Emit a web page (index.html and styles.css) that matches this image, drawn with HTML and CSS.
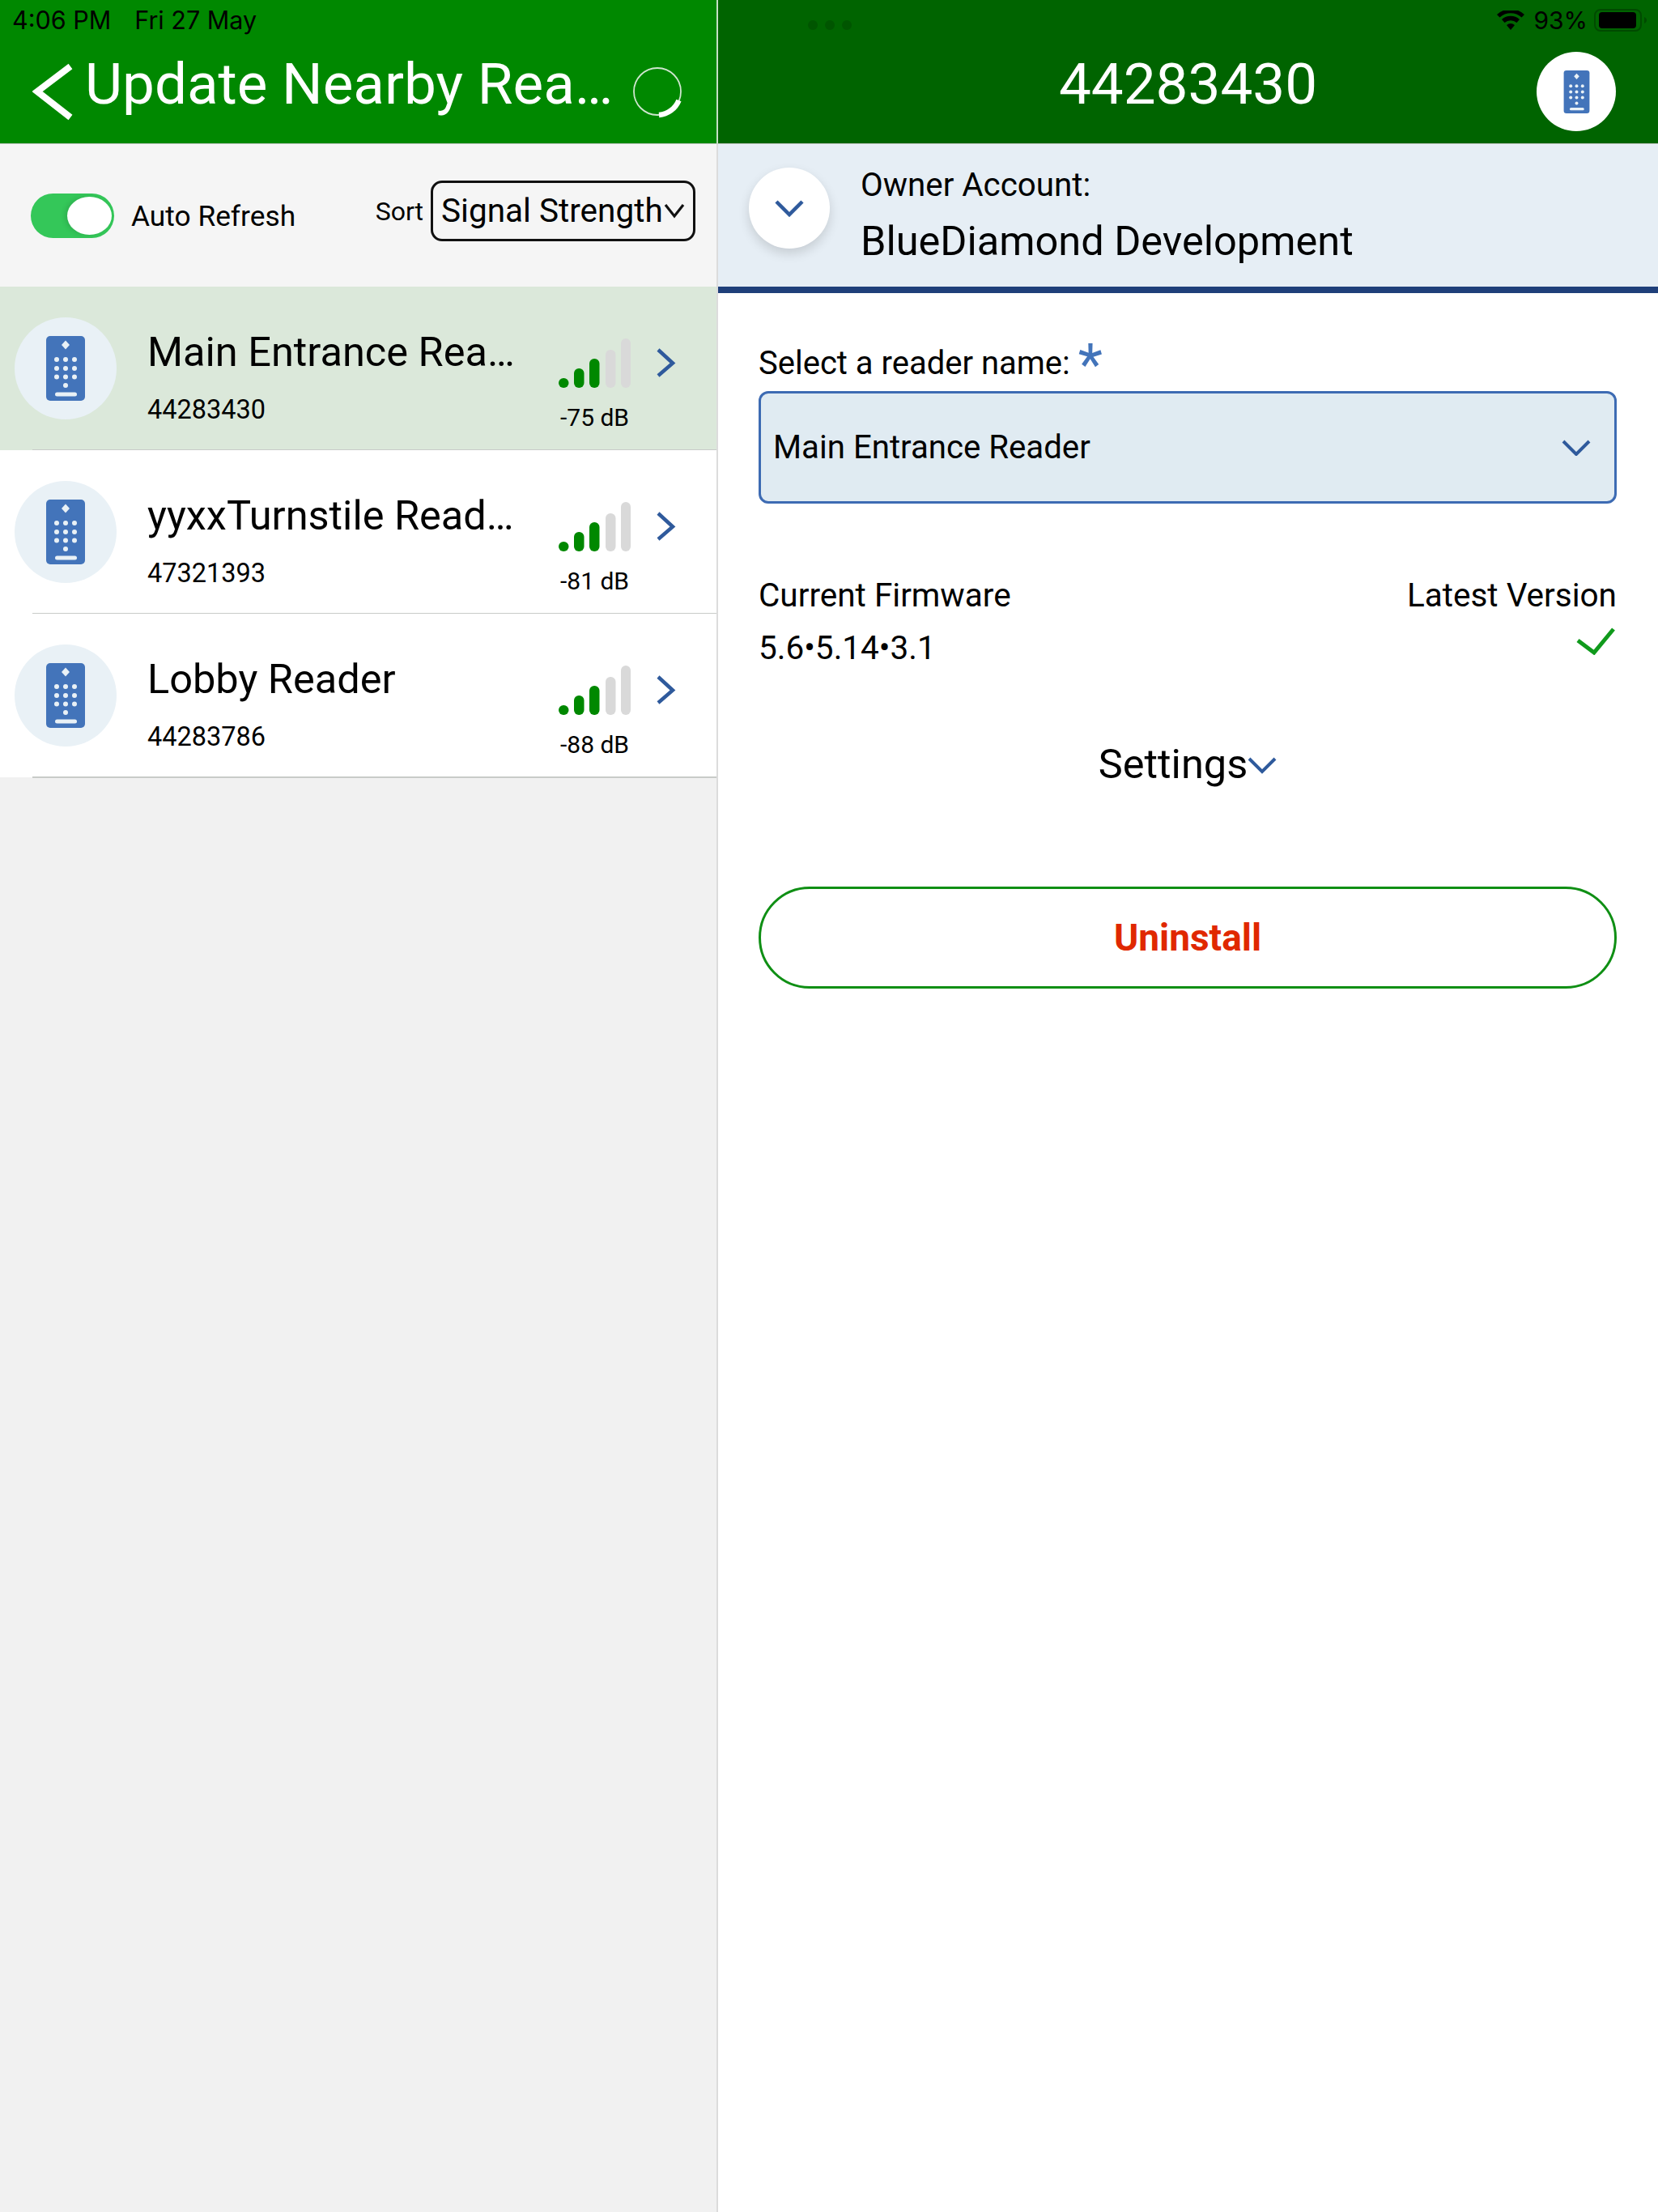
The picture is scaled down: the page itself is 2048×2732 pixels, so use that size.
FILE: index.html
```html
<!DOCTYPE html>
<html lang="en">
<head>
<meta charset="utf-8">
<title>Update Nearby Readers</title>
<link rel="stylesheet" href="styles.css">
</head>
<body>
<svg class="defs" width="0" height="0" aria-hidden="true">
  <defs>
    <symbol id="remote" viewBox="0 0 48 80">
      <rect width="48" height="80" rx="5" fill="#4374ba"/>
      <g fill="#e9f1f6">
        <path d="M24 5.500l5 5.500-5 5.500-5-5.500z"/>
        <circle cx="13" cy="29" r="3"/><circle cx="24" cy="29" r="3"/><circle cx="35" cy="29" r="3"/>
        <circle cx="13" cy="40" r="3"/><circle cx="24" cy="40" r="3"/><circle cx="35" cy="40" r="3"/>
        <circle cx="13" cy="50.500" r="3"/><circle cx="24" cy="50.500" r="3"/><circle cx="35" cy="50.500" r="3"/>
        <circle cx="24" cy="61" r="3"/>
        <rect x="11" y="69.500" width="27" height="5" rx="2.500"/>
      </g>
    </symbol>
    <symbol id="signal" viewBox="0 0 89 61">
      <g fill="#008800">
        <rect x="0" y="49" width="12.500" height="12" rx="6"/>
        <rect x="19" y="37" width="12.500" height="24" rx="6"/>
        <rect x="38" y="25" width="12.500" height="36" rx="6"/>
      </g>
      <g fill="#d9d9d9">
        <rect x="58" y="14" width="12.500" height="47" rx="6"/>
        <rect x="77" y="0" width="12" height="61" rx="6"/>
      </g>
    </symbol>
  </defs>
</svg>
<main class="app">
  <section class="left">
    <header class="bar bar-left">
      <div class="status">
        <span class="time">4:06 PM</span>
        <span class="date">Fri 27 May</span>
      </div>
      <div class="nav">
        <svg class="back" viewBox="0 0 52 72"><path d="M47 5L6 36l41 32" fill="none" stroke="#fff" stroke-width="8"/></svg>
        <h1 class="title">Update Nearby Rea…</h1>
        <svg class="spinner" viewBox="0 0 70 70">
          <circle cx="35" cy="35" r="29" fill="none" stroke="#cfe6cf" stroke-width="1.800"/>
          <path d="M61.500 46A29 29 0 0 1 37 64" fill="none" stroke="#fff" stroke-width="6.500"/>
        </svg>
      </div>
    </header>
    <div class="toolbar">
      <div class="toggle"><span class="knob"></span></div>
      <span class="auto">Auto Refresh</span>
      <span class="sort-label">Sort</span>
      <div class="sort-box">
        <span class="sort-value">Signal Strength</span>
        <svg class="sort-chev" viewBox="0 0 26 20"><path d="M2 3l11 14L24 3" fill="none" stroke="#111" stroke-width="3.200"/></svg>
      </div>
    </div>
    <ul class="list">
      <li class="row row-active">
        <div class="avatar"><svg class="remote"><use href="#remote"/></svg></div>
        <div class="info"><div class="name">Main Entrance Rea…</div><div class="serial">44283430</div></div>
        <div class="signal"><svg class="bars"><use href="#signal"/></svg><div class="db">-75 dB</div></div>
        <svg class="row-chev" viewBox="0 0 26 37"><path d="M3 2l18 16.500L3 34" fill="none" stroke="#2f5a9c" stroke-width="4.500"/></svg>
      </li>
      <li class="row">
        <div class="avatar"><svg class="remote"><use href="#remote"/></svg></div>
        <div class="info"><div class="name">yyxxTurnstile Read…</div><div class="serial">47321393</div></div>
        <div class="signal"><svg class="bars"><use href="#signal"/></svg><div class="db">-81 dB</div></div>
        <svg class="row-chev" viewBox="0 0 26 37"><path d="M3 2l18 16.500L3 34" fill="none" stroke="#2f5a9c" stroke-width="4.500"/></svg>
      </li>
      <li class="row">
        <div class="avatar"><svg class="remote"><use href="#remote"/></svg></div>
        <div class="info"><div class="name">Lobby Reader</div><div class="serial">44283786</div></div>
        <div class="signal"><svg class="bars"><use href="#signal"/></svg><div class="db">-88 dB</div></div>
        <svg class="row-chev" viewBox="0 0 26 37"><path d="M3 2l18 16.500L3 34" fill="none" stroke="#2f5a9c" stroke-width="4.500"/></svg>
      </li>
    </ul>
  </section>
  <section class="right">
    <header class="bar bar-right">
      <div class="status status-right">
        <span class="dots"><i></i><i></i><i></i></span>
        <span class="sys">
          <svg class="wifi" viewBox="0 0 34 24"><path d="M17 24l-5-6a7.500 7.500 0 0 1 10 0zM9.500 15L6 11a16.500 16.500 0 0 1 22 0l-3.500 4a11.500 11.500 0 0 0-15 0zM3.500 8.500L0 5a25 25 0 0 1 34 0l-3.500 3.500a20 20 0 0 0-27 0z" fill="#000"/></svg>
          <span class="pct">93%</span>
          <svg class="battery" viewBox="0 0 66 28"><rect x="1" y="1" width="57" height="26" rx="7" fill="none" stroke="#004a00" stroke-width="2"/><rect x="6" y="4" width="46" height="20" rx="4" fill="#000"/><path d="M62 10c2 1 3 2.500 3 4s-1 3-3 4z" fill="#004a00"/></svg>
        </span>
      </div>
      <div class="nav nav-right">
        <span></span>
        <h2 class="title serial-title">44283430</h2>
        <div class="reader-badge"><svg class="remote remote-small"><use href="#remote"/></svg></div>
      </div>
    </header>
    <div class="owner">
      <button class="round" type="button"><svg class="round-chev" viewBox="0 0 36 22"><path d="M2 3l16 16L34 3" fill="none" stroke="#2f5a9c" stroke-width="4.500"/></svg></button>
      <div class="owner-text">
        <div class="owner-label">Owner Account:</div>
        <div class="owner-name">BlueDiamond Development</div>
      </div>
    </div>
    <div class="body">
      <label class="field-label">Select a reader name: <span class="req">*</span></label>
      <div class="field">
        <span>Main Entrance Reader</span>
        <svg class="field-chev" viewBox="0 0 36 20"><path d="M2 2l16 16L34 2" fill="none" stroke="#2f5a9c" stroke-width="4"/></svg>
      </div>
      <div class="fw">
        <span>Current Firmware</span><span>Latest Version</span>
        <span>5.6•5.14•3.1</span>
        <svg class="check" viewBox="0 0 48 34"><path d="M2 16l20 15L46 2" fill="none" stroke="#109a1c" stroke-width="5"/></svg>
      </div>
      <div class="settings">
        <span>Settings</span>
        <svg class="settings-chev" viewBox="0 0 36 22"><path d="M2 3l16 16L34 3" fill="none" stroke="#2f5a9c" stroke-width="4"/></svg>
      </div>
      <button class="uninstall" type="button">Uninstall</button>
    </div>
  </section>
</main>
</body>
</html>
```
FILE: styles.css
```css
* { box-sizing: border-box; }
html, body { margin: 0; padding: 0; }
body { font-family: Roboto, "Liberation Sans", sans-serif; color: #000; background: #fff; }
.defs { position: absolute; }
.app { display: flex; width: 2048px; height: 2732px; overflow: hidden; }
.left { width: 887px; flex: none; border-right: 2px solid #dcdcdc; background: #f1f1f1; }
.right { flex: 1; background: #fff; }

.bar { height: 178px; border-bottom: 1px solid #c4c8c4; }
.bar-left { background: #008800; }
.bar-right { background: #006400; }
.left .bar-left { margin-right: -2px; border-right: 2px solid #c5e0c5; }

.status { height: 44px; display: flex; font-family: "Inter", "Liberation Sans", sans-serif; font-size: 30.500px; line-height: 50px; color: #000; }
.time { margin-left: 15px; }
.date { margin-left: 29px; }
.status-right { justify-content: space-between; align-items: flex-start; font-size: 30px; }
.dots { display: flex; gap: 9px; margin: 25px 0 0 111px; }
.dots i { width: 12px; height: 12px; border-radius: 50%; background: #005500; }
.sys { display: flex; align-items: flex-start; margin-right: 13px; }
.wifi { width: 34px; height: 24px; margin-top: 13px; }
.pct { margin-left: 11px; }
.battery { width: 66px; height: 28px; margin: 11px 0 0 8px; }

.nav { height: 133px; display: flex; align-items: flex-start; padding-left: 40px; }
.back { width: 52px; height: 72px; margin-top: 33px; flex: none; }
.title { margin: 20px 0 0 13px; font-size: 71px; line-height: 80px; font-weight: 400; color: #fff; white-space: nowrap; }
.spinner { width: 70px; height: 70px; margin: 34px 38px 0 auto; flex: none; }

.nav-right { display: grid; grid-template-columns: 1fr auto 1fr; padding-left: 0; }
.serial-title { margin: 20px 0 0; }
.reader-badge { justify-self: end; width: 98px; height: 98px; margin: 20px 52px 0 0; border-radius: 50%; background: #fff; display: flex; align-items: center; justify-content: center; }

.toolbar { height: 176px; background: #f5f5f5; display: flex; align-items: center; }
.toggle { width: 103px; height: 55px; margin-left: 38px; border-radius: 28px; background: #34c759; display: flex; align-items: center; justify-content: flex-end; padding-right: 3px; }
.knob { width: 55px; height: 47px; border-radius: 50%; background: #fff; box-shadow: -3px 0 6px rgba(0, 0, 0, .12); }
.auto { margin: 2px 0 0 21px; font-size: 35.300px; line-height: 44px; }
.sort-label { margin: 0 0 10px auto; font-size: 32px; line-height: 40px; }
.sort-box { width: 327px; height: 75px; margin: 0 26px 12px 9px; border: 3px solid #111; border-radius: 14px; display: flex; align-items: center; padding-left: 10px; background: #f5f5f5; }
.sort-value { font-size: 40.500px; line-height: 48px; white-space: nowrap; margin-top: -1px; }
.sort-chev { width: 26px; height: 20px; margin-left: 1px; flex: none; }

.list { margin: 0; padding: 0; list-style: none; }
.row { position: relative; height: 202px; background: #fff; display: flex; align-items: flex-start; padding-left: 18px; }
.row::after { content: ""; position: absolute; left: 40px; right: 0; bottom: -1px; height: 2px; background: #c8cbc8; }
.row-active { background: #dbe8da; }
.avatar { width: 126px; height: 126px; margin-top: 38px; border-radius: 50%; background: #e9f1f6; display: flex; align-items: center; justify-content: center; flex: none; }
.remote { width: 48px; height: 80px; display: block; }
.remote-small { width: 33px; height: 53px; }
.info { width: 502px; margin-left: 38px; padding-top: 51px; flex: none; }
.name { font-size: 50.500px; line-height: 60px; white-space: nowrap; }
.serial { margin-top: 21px; font-size: 32.500px; line-height: 40px; }
.signal { width: 100px; margin-left: 6px; padding-top: 64px; flex: none; }
.bars { width: 89px; height: 61px; display: block; }
.db { margin: 19px 0 0 2px; font-size: 30px; line-height: 36px; white-space: nowrap; }
.row-chev { width: 26px; height: 37px; margin: 76px 0 0 20px; flex: none; }

.owner { height: 184px; background: #e6eef5; border-bottom: 8px solid #1f3f7a; display: flex; align-items: flex-start; padding-left: 38px; }
.round { width: 100px; height: 100px; margin-top: 29px; border: 0; border-radius: 50%; background: #fff; box-shadow: 0 6px 14px rgba(0, 0, 0, .14); display: flex; align-items: center; justify-content: center; padding: 0; }
.round-chev { width: 36px; height: 22px; }
.owner-text { margin-left: 38px; }
.owner-label { margin-top: 27px; font-size: 40.300px; line-height: 48px; }
.owner-name { margin-top: 15px; font-size: 50.500px; line-height: 60px; }

.body { padding: 63px 51px 0 50px; }
.field-label { display: block; font-size: 40px; line-height: 48px; }
.req { position: relative; top: 12px; color: #4374ba; font-size: 70px; line-height: 0; }
.field { height: 139px; margin-top: 10px; border: 3px solid #3d6bb3; border-radius: 12px; background: #e0ebf2; display: flex; align-items: center; justify-content: space-between; padding: 0 29px 0 15px; font-size: 40.200px; line-height: 48px; }
.field-chev { width: 36px; height: 20px; }
.fw { display: grid; grid-template-columns: 1fr auto; row-gap: 17px; margin-top: 89px; font-size: 40.500px; line-height: 48px; }
.check { width: 48px; height: 34px; margin: -1px 2px 0 0; justify-self: end; }
.settings { display: flex; align-items: center; justify-content: center; margin-top: 90px; font-size: 50.500px; line-height: 60px; }
.settings-chev { width: 36px; height: 22px; margin-top: 2px; }
.uninstall { display: block; width: 100%; height: 126px; margin-top: 121px; border: 3px solid #0f8f14; border-radius: 63px; background: #fff; color: #e02800; font-family: Roboto, sans-serif; font-size: 46px; font-weight: 700; }
```
